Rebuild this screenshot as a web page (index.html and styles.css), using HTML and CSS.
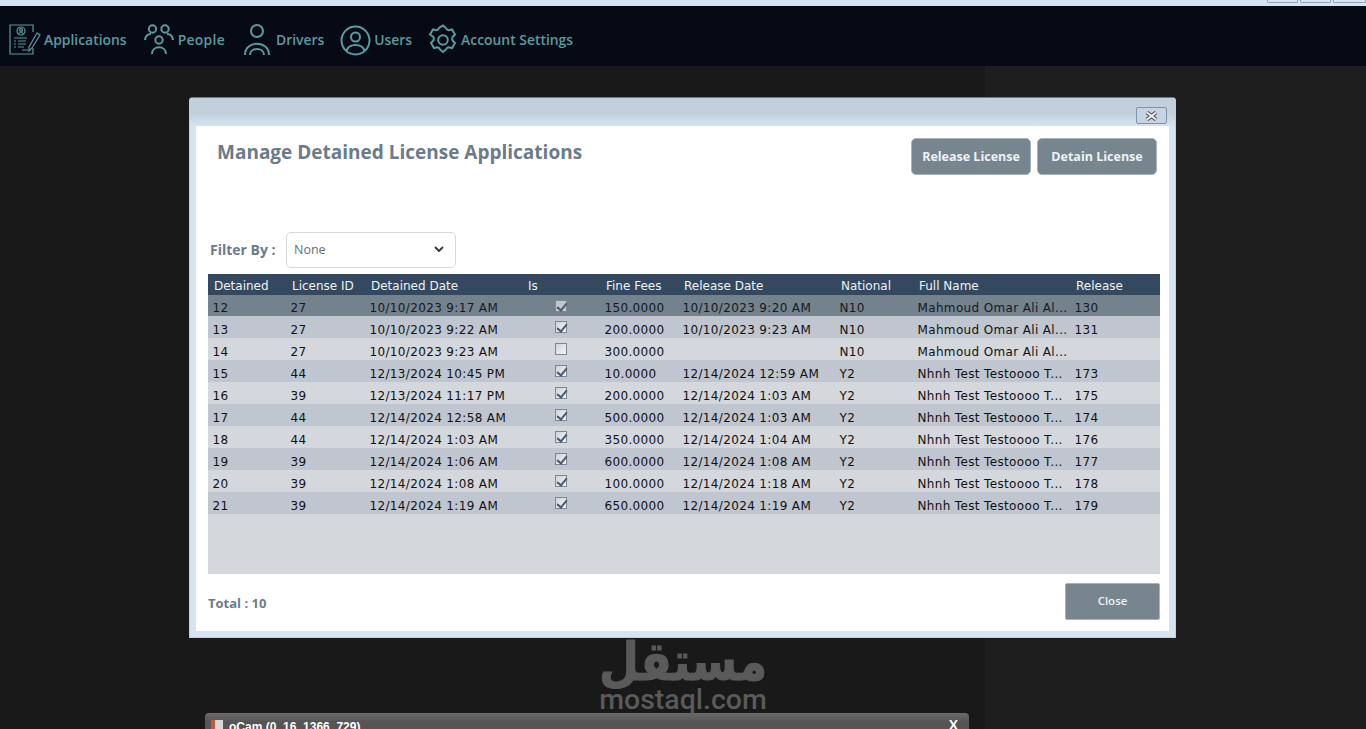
FILE: index.html
```html
<!DOCTYPE html>
<html lang="en">
<head>
<meta charset="utf-8">
<title>Manage Detained License Applications</title>
<link rel="stylesheet" href="styles.css">
</head>
<body>
<div class="topstrip">
  <span class="wbtn"></span><span class="wbtn"></span><span class="wbtn"></span>
</div>
<nav class="nav">
  <a class="nav-item i1">
    <svg class="ic" width="32" height="32" viewBox="0 0 32 32" fill="none" stroke="currentColor" stroke-width="1.2">
      <path d="M24 8V1H1v29h23v-6"/>
      <circle cx="12" cy="7" r="4"/><circle cx="12" cy="6" r="1.4"/><path d="M9.5 10c1-2 4-2 5 0"/>
      <path d="M5 14h13M5 17h2M9 17h8M5 20h2M9 20h8M5 23h2M9 23h6M13 26h6" stroke-width="1"/>
      <path d="M28 9l3 2-8 13-3 3 0-4z"/>
    </svg>
    <span>Applications</span>
  </a>
  <a class="nav-item i2">
    <svg class="ic" width="30" height="32" viewBox="0 0 30 32" fill="none" stroke="currentColor" stroke-width="2">
      <circle cx="8.5" cy="5" r="3.7"/><circle cx="21" cy="5" r="3.7"/><circle cx="15" cy="16" r="3.7"/>
      <path d="M1 16c.5-4 3-6 6-6M29 16c-.5-4-3-6-6-6M8 30c0-9 14-9 14 0"/>
    </svg>
    <span>People</span>
  </a>
  <a class="nav-item i3">
    <svg class="ic" width="26" height="32" viewBox="0 0 26 32" fill="none" stroke="currentColor" stroke-width="2">
      <circle cx="13" cy="7" r="6"/>
      <path d="M1 31c0-15 24-15 24 0M6 31c0-8 14-8 14 0"/>
    </svg>
    <span>Drivers</span>
  </a>
  <a class="nav-item i4">
    <svg class="ic" width="31" height="31" viewBox="0 0 31 31" fill="none" stroke="currentColor" stroke-width="2">
      <circle cx="15.500" cy="15.500" r="14"/>
      <circle cx="15.500" cy="12" r="4.500"/>
      <path d="M6.500 26c2-8 16-8 18 0"/>
    </svg>
    <span>Users</span>
  </a>
  <a class="nav-item i5">
    <svg class="ic" width="30" height="32" viewBox="0 0 30 32" fill="none" stroke="currentColor" stroke-width="2">
      <path d="M15 1.500l3 2.500c.5 1.500 1 2 2.500 2.300l3.500-.8 3 5-2.500 2.500c-.5 1.500-.5 2 0 3.500l2.500 2.500-3 5-3.500-.8c-1.500.3-2 .8-2.500 2.300l-3 2.500-3-2.500c-.5-1.500-1-2-2.500-2.300l-3.500.8-3-5 2.500-2.500c.5-1.500.5-2 0-3.500L2 10.500l3-5 3.500.8C10 6 10.500 5.500 11 4z"/>
      <circle cx="15" cy="16" r="4.800"/>
    </svg>
    <span>Account Settings</span>
  </a>
</nav>
<main class="desktop">
  <div class="shade"></div>
  <div class="watermark">
    <div class="wm-ar">مستقل</div>
    <div class="wm-en">mostaql.com</div>
  </div>
  <section class="dialog">
    <header class="titlebar"><span class="close-x">
      <svg width="13" height="10" viewBox="0 0 13 10"><path d="M2 1.500l9 7M11 1.500l-9 7" stroke="#4a4a4a" stroke-width="4" fill="none"/><path d="M2 1.500l9 7M11 1.500l-9 7" stroke="#f2f2f2" stroke-width="2" fill="none"/></svg>
    </span></header>
    <div class="client">
      <div class="head">
        <h1 class="title">Manage Detained License Applications</h1>
        <div class="actions">
          <button class="btn btn-release">Release License</button>
          <button class="btn btn-detain">Detain License</button>
        </div>
      </div>
      <div class="filter">
        <label class="filter-label">Filter By :</label>
        <div class="select"><span>None</span>
          <svg width="10" height="7" viewBox="0 0 10 7"><path d="M1 1l4 4 4-4" fill="none" stroke="#333" stroke-width="1.800"/></svg>
        </div>
      </div>
      <div class="grid">
        <table class="table">
          <colgroup>
            <col class="c78"><col class="c79"><col class="c157"><col class="c78"><col class="c78"><col class="c157"><col class="c78"><col class="c157"><col>
          </colgroup>
          <thead>
            <tr><th>Detained</th><th>License ID</th><th>Detained Date</th><th>Is</th><th>Fine Fees</th><th>Release Date</th><th>National</th><th>Full Name</th><th>Release</th></tr>
          </thead>
          <tbody>
            <tr class="sel"><td>12</td><td>27</td><td>10/10/2023 9:17 AM</td><td class="chk"><i class="cb on"></i></td><td>150.0000</td><td>10/10/2023 9:20 AM</td><td>N10</td><td>Mahmoud Omar Ali Al...</td><td>130</td></tr>
            <tr class="alt"><td>13</td><td>27</td><td>10/10/2023 9:22 AM</td><td class="chk"><i class="cb on"></i></td><td>200.0000</td><td>10/10/2023 9:23 AM</td><td>N10</td><td>Mahmoud Omar Ali Al...</td><td>131</td></tr>
            <tr><td>14</td><td>27</td><td>10/10/2023 9:23 AM</td><td class="chk"><i class="cb"></i></td><td>300.0000</td><td></td><td>N10</td><td>Mahmoud Omar Ali Al...</td><td></td></tr>
            <tr class="alt"><td>15</td><td>44</td><td>12/13/2024 10:45 PM</td><td class="chk"><i class="cb on"></i></td><td>10.0000</td><td>12/14/2024 12:59 AM</td><td>Y2</td><td>Nhnh Test Testoooo T...</td><td>173</td></tr>
            <tr><td>16</td><td>39</td><td>12/13/2024 11:17 PM</td><td class="chk"><i class="cb on"></i></td><td>200.0000</td><td>12/14/2024 1:03 AM</td><td>Y2</td><td>Nhnh Test Testoooo T...</td><td>175</td></tr>
            <tr class="alt"><td>17</td><td>44</td><td>12/14/2024 12:58 AM</td><td class="chk"><i class="cb on"></i></td><td>500.0000</td><td>12/14/2024 1:03 AM</td><td>Y2</td><td>Nhnh Test Testoooo T...</td><td>174</td></tr>
            <tr><td>18</td><td>44</td><td>12/14/2024 1:03 AM</td><td class="chk"><i class="cb on"></i></td><td>350.0000</td><td>12/14/2024 1:04 AM</td><td>Y2</td><td>Nhnh Test Testoooo T...</td><td>176</td></tr>
            <tr class="alt"><td>19</td><td>39</td><td>12/14/2024 1:06 AM</td><td class="chk"><i class="cb on"></i></td><td>600.0000</td><td>12/14/2024 1:08 AM</td><td>Y2</td><td>Nhnh Test Testoooo T...</td><td>177</td></tr>
            <tr><td>20</td><td>39</td><td>12/14/2024 1:08 AM</td><td class="chk"><i class="cb on"></i></td><td>100.0000</td><td>12/14/2024 1:18 AM</td><td>Y2</td><td>Nhnh Test Testoooo T...</td><td>178</td></tr>
            <tr class="alt"><td>21</td><td>39</td><td>12/14/2024 1:19 AM</td><td class="chk"><i class="cb on"></i></td><td>650.0000</td><td>12/14/2024 1:19 AM</td><td>Y2</td><td>Nhnh Test Testoooo T...</td><td>179</td></tr>
          </tbody>
        </table>
      </div>
      <div class="foot">
        <span class="total">Total : 10</span>
        <button class="btn btn-close">Close</button>
      </div>
    </div>
  </section>
  <div class="ocam">
    <span class="ocam-ic"></span><span class="ocam-title">oCam (0, 16, 1366, 729)</span>
    <span class="ocam-min">_</span><span class="ocam-x">X</span>
  </div>
</main>
</body>
</html>
```
FILE: styles.css
```css
* { box-sizing: border-box; }
html, body { margin: 0; padding: 0; height: 729px; overflow: hidden; }
body { background: #1a1a1a; font-family: "Open Sans", "Noto Sans", sans-serif; display: flex; flex-direction: column; }

.topstrip { height: 6px; background: #d6e3f0; display: flex; justify-content: flex-end; gap: 2px; flex: none; }
.wbtn { width: 31px; height: 3px; border: 1px solid #8fa3b8; border-top: 0; border-radius: 0 0 2px 2px; background: #dbe6f1; }
.wbtn:last-child { width: 33px; margin-right: 0; }

.nav { height: 60px; flex: none; background: #050a14; display: flex; align-items: center; color: #5b9aa0; padding: 8px 0 0 9px; }
.nav-item { display: flex; align-items: center; font-weight: 600; font-size: 13.900px; }
.ic { flex: none; display: block; }
.nav-item span { display: block; padding-bottom: 2px; }
.i1 span { margin-left: 3px; }
.i2 { margin-left: 17px; } .i2 span { margin-left: 4px; letter-spacing: .3px; }
.i3 { margin-left: 19px; } .i3 span { margin-left: 6px; }
.i4 { margin-left: 16px; } .i4 span { margin-left: 3px; }
.i5 { margin-left: 16px; } .i5 span { margin-left: 3px; }

.desktop { position: relative; flex: 1; background: #191919; overflow: hidden; }
.shade { position: absolute; left: 985px; right: 0; top: 0; bottom: 0; background: #1e1e1e; }

.watermark { position: absolute; left: 580px; top: 576px; width: 206px; text-align: center; color: #5a5a5a; }
.wm-ar { font-family: "DejaVu Sans", sans-serif; font-weight: 700; font-size: 46px; line-height: 40px; height: 40px; transform: scaleY(1.150); -webkit-text-stroke: 1px #5a5a5a; }
.wm-en { font-family: "Roboto", sans-serif; font-weight: 500; font-size: 28.500px; line-height: 30px; height: 30px; margin-top: 3px; }

.dialog { position: absolute; left: 189px; top: 31px; width: 987px; height: 541px; background: #d6e4f1; border: 1px solid #ccd; border-top-color: #777; border-radius: 4px 4px 0 0; padding: 0 6px 6px 6px; display: flex; flex-direction: column; }
.titlebar { height: 28px; flex: none; background: linear-gradient(#c2d0de 0 55%, #d6e4f1 100%); margin: 0 -6px; padding: 9px 8px 0 0; display: flex; justify-content: flex-end; }
.close-x { width: 31px; height: 17px; border: 1px solid #7f93a8; border-radius: 2px; background: #c6d3e0; display: flex; align-items: center; justify-content: center; }

.client { flex: 1; background: #fff; display: flex; flex-direction: column; padding: 0 9px 0 12px; }
.head { display: flex; justify-content: space-between; height: 106px; flex: none; }
.title { margin: 13px 0 0 9px; font-size: 19px; line-height: 26px; font-weight: 700; color: #6b7b8a; }
.actions { display: flex; gap: 6px; margin-top: 12px; margin-right: 3px; }
.btn { font: 700 12.500px "Open Sans", sans-serif; color: #eef2f6; background: #77858f; border: 1px solid #a6b2bc; border-radius: 5px; height: 37px; padding: 0; }
.btn-release { width: 120px; }
.btn-detain { width: 120px; }

.filter { display: flex; align-items: center; height: 36px; flex: none; margin-left: 2px; }
.filter-label { font-size: 14px; font-weight: 700; color: #6b7b8a; width: 76px; padding-bottom: 2px; }
.select { width: 170px; height: 36px; border: 1px solid #d5d9de; border-radius: 5px; display: flex; align-items: center; justify-content: space-between; padding: 0 11px 2px 7px; font-size: 12.500px; color: #64707c; }

.grid { margin-top: 6px; height: 300px; flex: none; background: #d4d7dc; }
.table { width: 100%; table-layout: fixed; border-collapse: collapse; font-family: "DejaVu Sans", sans-serif; font-size: 12px; letter-spacing: .35px; }
.c78 { width: 78px; } .c79 { width: 79px; } .c157 { width: 157px; }
.table th { height: 21px; padding: 2px 0 0 6px; background: #34485f; color: #f0f2f5; font-weight: 400; letter-spacing: 0; text-align: left; white-space: nowrap; }
.table td { height: 22px; padding: 6px 0 0 4.500px; color: #111; background: #d4d7dc; white-space: nowrap; overflow: hidden; }
.table tr.alt td { background: #c0c6cf; }
.table tr.sel td { background: #74828e; color: #15191e; height: 21px; padding-top: 5px; }
.table td.chk, .table tr.sel td.chk { padding: 0 0 0 33px; }
.cb { display: block; width: 12px; height: 12px; border: 1px solid #7a8796; background: linear-gradient(135deg, #cfd2d6, #f4f5f6); position: relative; }
.sel .cb { background: #c2c6cb; }
.cb.on::after { content: ""; position: absolute; left: 3px; top: 0; width: 4px; height: 8px; border: solid #4a5a70; border-width: 0 2px 2px 0; transform: rotate(40deg); }

.foot { display: flex; justify-content: space-between; align-items: center; margin-top: 9px; height: 37px; }
.total { font-size: 13px; font-weight: 700; color: #6b7b8a; padding-top: 3px; }
.btn-close { width: 95px; height: 37px; font-weight: 600; font-size: 11.500px; border-radius: 2px; padding-bottom: 3px; }

.ocam { position: absolute; left: 205px; top: 647px; width: 764px; height: 30px; background: linear-gradient(#6a6a6a, #555 30%); border-radius: 4px 4px 0 0; color: #fff; font: 700 12px "Liberation Sans", sans-serif; display: flex; align-items: flex-start; padding: 7px 11px 0 6px; }
.ocam-ic { width: 12px; height: 10px; background: #d8d8d8; border-left: 4px solid #c25a3a; margin-right: 6px; }
.ocam-title { flex: 1; }
.ocam-min { margin-right: 14px; }
.ocam-x { font-size: 14px; line-height: 11px; }
```
